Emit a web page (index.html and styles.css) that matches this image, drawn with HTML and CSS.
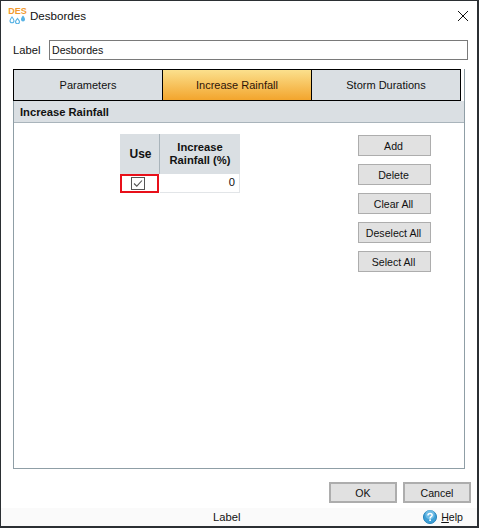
FILE: index.html
```html
<!DOCTYPE html>
<html lang="en">
<head>
    <meta charset="UTF-8">
    <title>Desbordes</title>
    <link rel="stylesheet" href="styles.css">
</head>
<body>

<div class="window">
    <!-- Title bar -->
    <div class="titlebar">
        <div class="logo">
            <span class="logo-text">DES</span>
            <svg class="logo-drops" width="17" height="9" viewBox="0 0 17 9">
                <path d="M3 2C1.800 3.500 1 4.500 1 5.800a2 2 0 0 0 4 0C5 4.500 4.200 3.500 3 2Z" fill="none" stroke="#57b2e4" stroke-width="1.100"/>
                <path d="M8.500 3.500C7.300 5 6.500 5.800 6.500 6.800a2 2 0 0 0 4 0C10.500 5.800 9.700 5 8.500 3.500Z" fill="none" stroke="#57b2e4" stroke-width="1.100"/>
                <path d="M14 .5C12.800 2 12 3.200 12 4.400a2 2 0 0 0 4 0C16 3.200 15.200 2 14 .5Z" fill="#57b2e4"/>
            </svg>
        </div>
        <span class="title">Desbordes</span>
        <svg class="close" width="10" height="10" viewBox="0 0 10 10">
            <path d="M0 0L10 10M10 0L0 10" stroke="#111" stroke-width="1" fill="none"/>
        </svg>
    </div>

    <!-- Label -->
    <div class="label-row">
        <label for="label">Label</label>
        <input type="text" id="label" value="Desbordes">
    </div>

    <!-- Tabs and panel -->
    <div class="panel">
        <div class="tabs">
            <div class="tab">Parameters</div>
            <div class="tab active">Increase Rainfall</div>
            <div class="tab">Storm Durations</div>
        </div>
        <div class="panel-header">Increase Rainfall</div>
        <div class="panel-body">
            <div class="grid">
                <div class="grid-head use-col">Use</div>
                <div class="grid-head value-col">Increase<br>Rainfall (%)</div>
                <div class="grid-check">
                    <svg width="14" height="13" viewBox="0 0 14 13">
                        <rect x=".5" y=".5" width="13" height="12" fill="#fff" stroke="#555"/>
                        <path d="M3 6.500L5.800 9.200L11 3.500" fill="none" stroke="#555" stroke-width="1.100"/>
                    </svg>
                </div>
                <div class="grid-value">0</div>
            </div>
            <div class="side-buttons">
                <button>Add</button>
                <button>Delete</button>
                <button>Clear All</button>
                <button>Deselect All</button>
                <button>Select All</button>
            </div>
        </div>
    </div>

    <!-- OK / Cancel -->
    <div class="dialog-buttons">
        <button class="dialog-btn">OK</button>
        <button class="dialog-btn">Cancel</button>
    </div>

    <!-- Status bar -->
    <div class="statusbar">
        <span class="status-label">Label</span>
        <svg class="help-icon" width="14" height="14" viewBox="0 0 15 15">
            <circle cx="7.500" cy="7.500" r="7" fill="#3d9fd6" stroke="#1f7fb8"/>
            <circle cx="7.500" cy="5" r="5" fill="#8fd0f0" opacity=".6"/>
            <path d="M5.300 5.800C5.400 3 9.800 3 9.800 5.600C9.800 7.200 7.600 7.200 7.600 9" fill="none" stroke="#fff" stroke-width="1.600"/>
            <rect x="6.700" y="10" width="1.800" height="1.800" fill="#fff"/>
        </svg>
        <span class="help"><u>H</u>elp</span>
    </div>
</div>

</body>
</html>
```

FILE: styles.css
```css
/* General */
html, body {
    margin: 0;
    padding: 0;
    height: 100%;
    background-color: #fff;
}

.window {
    box-sizing: border-box;
    width: 479px;
    height: 528px;
    display: flex;
    flex-direction: column;
    border: 1px solid #2b2f33;
    border-right-width: 2px;
    border-bottom-width: 2px;
    background-color: #fff;
    color: #111;
    font-family: "Liberation Sans", Arial, sans-serif;
    font-size: 11.2px;
}

/* Title bar */
.titlebar {
    height: 29px;
    flex: none;
    display: flex;
    align-items: center;
    padding: 0 9px 0 8px;
}

.logo {
    width: 17px;
    display: flex;
    flex-direction: column;
    align-items: center;
    margin-right: 4px;
}

.logo-text {
    color: #f29a2e;
    font-size: 9px;
    font-weight: bold;
    line-height: 8px;
}

.title {
    flex: 1;
    font-size: 11.600px;
}

/* Label */
.label-row {
    height: 20px;
    flex: none;
    margin-top: 10px;
    padding: 0 9px 0 12px;
    display: flex;
    align-items: center;
}

.label-row label {
    width: 36px;
    flex: none;
}

.label-row input {
    box-sizing: border-box;
    flex: 1;
    min-width: 0;
    height: 20px;
    padding: 0 2px;
    border: 1px solid #7a7a7a;
    font: inherit;
    font-size: 10.600px;
    color: #111;
    outline: none;
}

/* Panel */
.panel {
    box-sizing: border-box;
    width: 452px;
    height: 400px;
    flex: none;
    margin: 9px 0 0 12px;
    display: flex;
    flex-direction: column;
    border: 1px solid #8f9ea6;
    border-top: none;
}

.tabs {
    height: 32px;
    flex: none;
    display: flex;
    margin-left: -1px;
    margin-right: 3px;
}

.tab {
    box-sizing: border-box;
    flex: 1;
    display: flex;
    align-items: center;
    justify-content: center;
    background-color: #dadfe3;
    border: 1px solid #000;
    border-left-width: 0;
    color: #111;
    font-size: 11px;
}

.tab:first-child {
    border-left-width: 1px;
}

.tab.active {
    background: linear-gradient(#fbe08d, #f3a52d);
    color: #2e1408;
}

.panel-header {
    height: 22px;
    flex: none;
    box-sizing: border-box;
    padding-left: 6px;
    display: flex;
    align-items: center;
    background-color: #dadfe3;
    border-bottom: 1px solid #a9b4bb;
    font-weight: bold;
    color: #111;
}

.panel-body {
    flex: 1;
    display: flex;
    align-items: flex-start;
    padding: 11px 0 0 106px;
}

/* Grid */
.grid {
    display: grid;
    grid-template-columns: 40px 80px;
    grid-template-rows: 40px 19px;
}

.grid-head {
    box-sizing: border-box;
    display: flex;
    align-items: center;
    justify-content: center;
    text-align: center;
    background-color: #dadfe3;
    font-weight: bold;
    line-height: 13px;
    color: #111;
}

.use-col {
    border-right: 1px solid #a9b4bb;
    padding-left: 2px;
    font-size: 12px;
}

.grid-check {
    box-sizing: border-box;
    margin-right: 1px;
    padding-right: 3px;
    display: flex;
    align-items: center;
    justify-content: center;
    outline: 2px solid #e8101a;
    outline-offset: -2px;
}

.grid-value {
    box-sizing: border-box;
    padding-right: 4px;
    text-align: right;
    line-height: 17px;
    border-bottom: 1px solid #e2e5e8;
    border-right: 1px solid #e2e5e8;
}

/* Buttons */
.side-buttons {
    margin-left: 118px;
    margin-top: 1px;
    display: flex;
    flex-direction: column;
    gap: 8px;
}

button {
    box-sizing: border-box;
    padding: 0;
    font: inherit;
    font-size: 10.600px;
    color: #111;
}

.side-buttons button {
    width: 73px;
    height: 21px;
    padding-right: 2px;
    background-color: #e1e1e1;
    border: 1px solid #adadad;
}

.dialog-buttons {
    flex: none;
    display: flex;
    justify-content: flex-end;
    gap: 6px;
    margin-top: 13px;
    padding-right: 6px;
}

.dialog-btn {
    width: 68px;
    height: 21px;
    background-color: #e1e1e1;
    border: 2px solid #adadad;
}

/* Status bar */
.statusbar {
    flex: 1;
    margin-top: 5px;
    padding-right: 14px;
    display: flex;
    align-items: center;
    background-color: #fafafa;
}

.status-label {
    margin-left: 212px;
}

.help-icon {
    margin-left: auto;
}

.help {
    margin-left: 4px;
    font-size: 10.600px;
}
```
